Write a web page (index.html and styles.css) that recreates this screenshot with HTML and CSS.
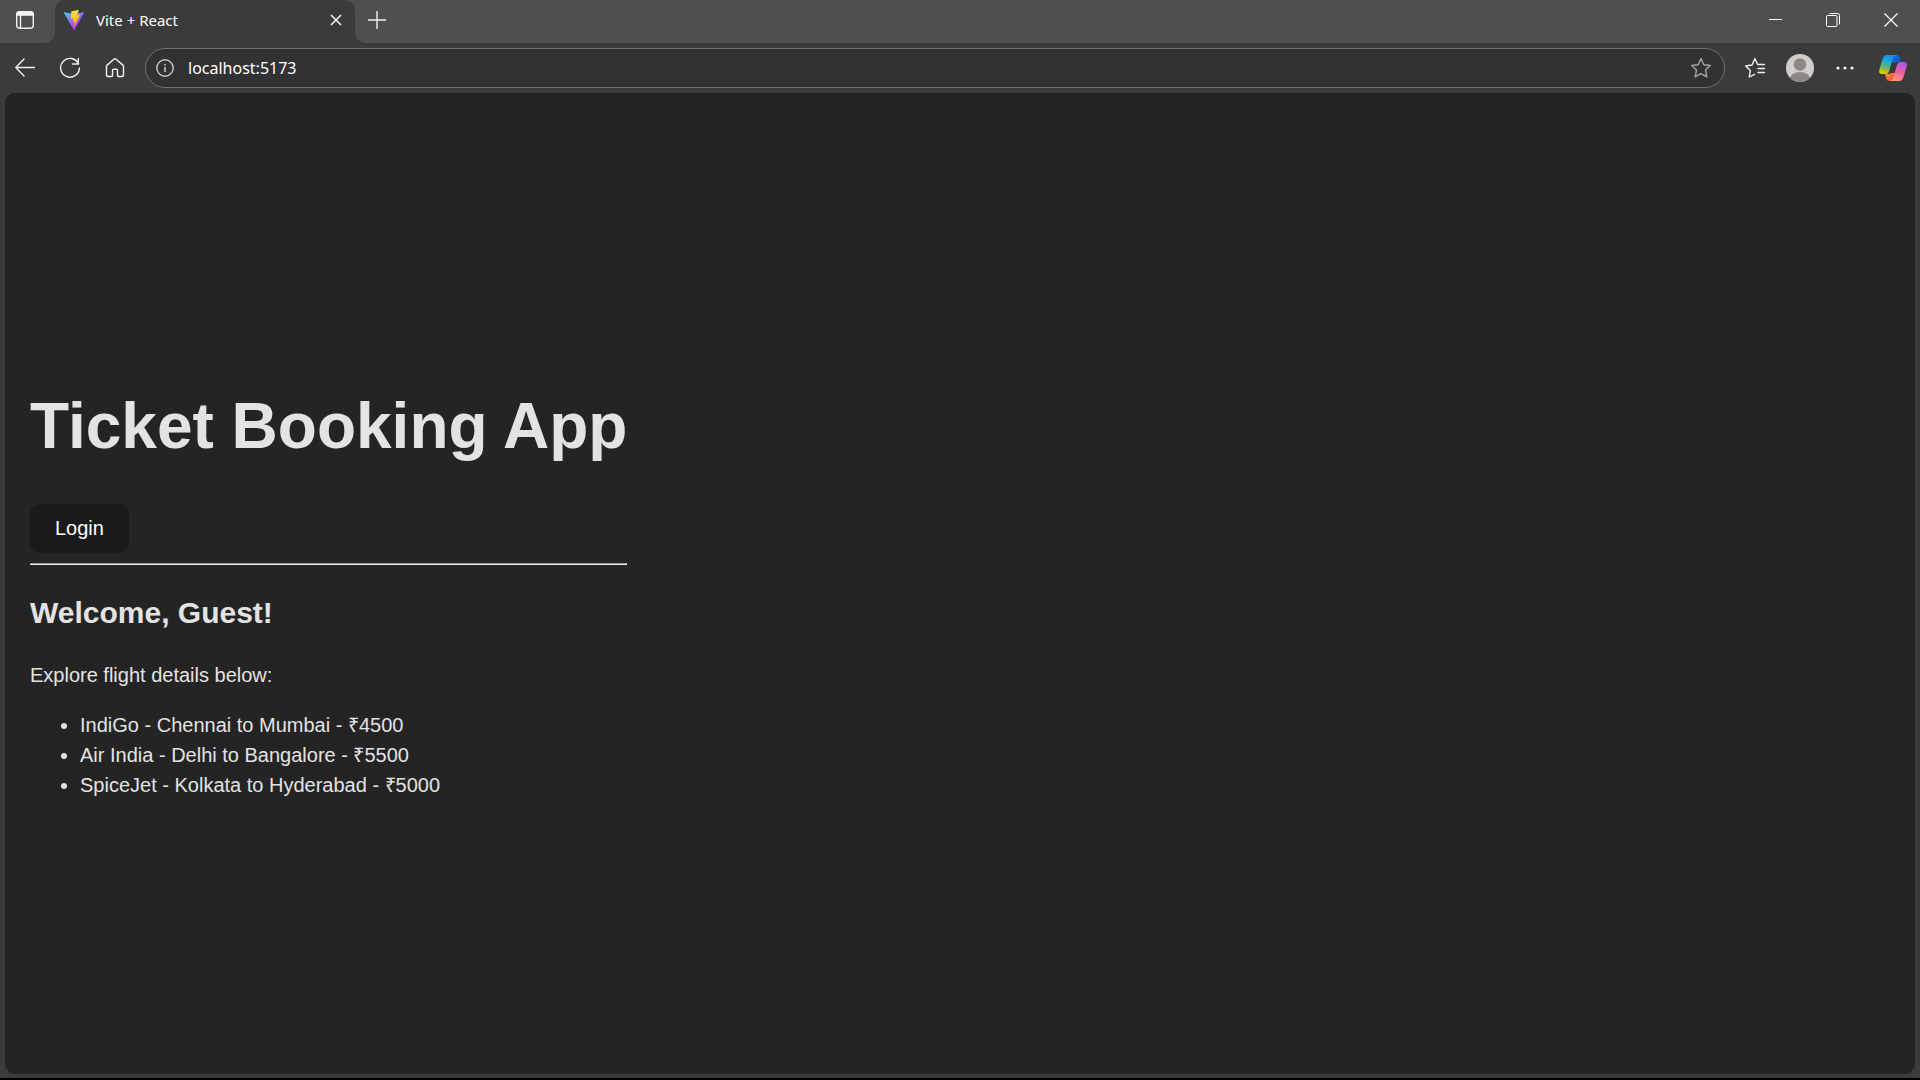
FILE: index.html
```html
<!DOCTYPE html>
<html lang="en">
<head>
<meta charset="utf-8">
<meta name="viewport" content="width=device-width, initial-scale=1">
<title>Vite + React</title>
<link rel="stylesheet" href="styles.css">
</head>
<body>
<div class="browser">
  <header class="titlebar">
    <div class="tab-actions">
      <button class="icon-button" type="button" aria-label="Tab actions">
        <svg width="20" height="20" viewBox="0 0 20 20" fill="none" stroke="#f2f2f2" stroke-width="1.4"><rect x="1.7" y="1.700" width="16.6" height="16.600" rx="3"/><path d="M2 4.500Q2 2 4.500 2H15.500Q18 2 18 4.500V5H2z" fill="#f2f2f2"/><path d="M5.500 5V18"/></svg>
      </button>
    </div>
    <div class="tab-slot">
      <div class="tab">
        <svg class="tab-icon" width="20" height="20" viewBox="0 0 257 257">
          <defs>
            <linearGradient id="vite-a" x1="0" y1="0" x2=".6" y2=".8"><stop offset="0" stop-color="#41d1ff"/><stop offset="1" stop-color="#bd34fe"/></linearGradient>
            <linearGradient id="vite-b" x1=".43" y1="0" x2=".5" y2=".9"><stop offset="0" stop-color="#ffea83"/><stop offset=".08" stop-color="#ffdd35"/><stop offset="1" stop-color="#ffa800"/></linearGradient>
          </defs>
          <path fill="url(#vite-a)" d="M255.153 37.938 134.897 252.976c-2.483 4.440-8.862 4.466-11.382.048L.875 37.958c-2.746-4.814 1.371-10.646 6.827-9.670l120.385 21.517a6.537 6.537 0 0 0 2.322-.004l117.867-21.483c5.438-.991 9.574 4.796 6.877 9.620Z"/>
          <path fill="url(#vite-b)" d="M185.432.063 96.440 17.501a3.268 3.268 0 0 0-2.634 3.014l-5.474 92.456a3.268 3.268 0 0 0 3.997 3.378l24.777-5.718c2.318-.535 4.413 1.507 3.936 3.838l-7.361 36.047c-.495 2.426 1.782 4.500 4.151 3.780l15.304-4.649c2.372-.720 4.652 1.360 4.150 3.788l-11.698 56.621c-.732 3.542 3.979 5.473 5.943 2.437l1.313-2.028 72.516-144.720c1.215-2.423-.880-5.186-3.540-4.672l-25.505 4.922c-2.396.462-4.435-1.770-3.759-4.114l16.646-57.705c.677-2.350-1.370-4.583-3.769-4.113Z"/>
        </svg>
        <span class="tab-title">Vite + React</span>
        <button class="tab-close" type="button" aria-label="Close tab">
          <svg width="12" height="12" viewBox="0 0 12 12" stroke="#f2f2f2" stroke-width="1.5"><path d="M1 1 11 11M11 1 1 11"/></svg>
        </button>
      </div>
    </div>
    <div class="tab-rest">
      <button class="icon-button" type="button" aria-label="New tab">
        <svg width="18" height="18" viewBox="0 0 18 18" stroke="#f2f2f2" stroke-width="1.400"><path d="M0 9H18M9 0V18"/></svg>
      </button>
      <div class="window-controls">
        <button class="window-button" type="button" aria-label="Minimize">
          <svg width="14" height="14" viewBox="0 0 14 14" stroke="#fff"><path d="M1 6.500H14"/></svg>
        </button>
        <button class="window-button" type="button" aria-label="Restore">
          <svg width="14" height="14" viewBox="0 0 14 14" fill="none" stroke="#fff"><rect x=".5" y="2.500" width="10.500" height="11" rx="1"/><path d="M3 1Q3.500.5 4.500.5H11.500Q13.500.5 13.500 2.500V10Q13.500 11 13 11.500"/></svg>
        </button>
        <button class="window-button" type="button" aria-label="Close window">
          <svg width="14" height="14" viewBox="0 0 14 14" stroke="#fff" stroke-width="1.200"><path d="M.5.5 13.500 13.500M13.500.5.5 13.500"/></svg>
        </button>
      </div>
    </div>
  </header>

  <nav class="toolbar" aria-label="Navigation">
    <button class="icon-button" type="button" aria-label="Back">
      <svg width="20" height="20" viewBox="0 0 20 20" fill="none" stroke="#f2f2f2" stroke-width="1.400" stroke-linecap="round" stroke-linejoin="round"><path d="M19.500 9.500H1M9 1 .8 9.500 9 18"/></svg>
    </button>
    <button class="icon-button" type="button" aria-label="Refresh">
      <svg width="22" height="22" viewBox="0 0 22 22" fill="none" stroke="#f2f2f2" stroke-width="1.400" stroke-linecap="round" stroke-linejoin="round"><path d="M19.600 7A9.400 9.400 0 1 0 20.400 11M19.300 1.500V7H13.500"/></svg>
    </button>
    <button class="icon-button" type="button" aria-label="Home">
      <svg width="20" height="20" viewBox="0 0 20 20" fill="none" stroke="#f2f2f2" stroke-width="1.400" stroke-linejoin="round"><path d="M1.500 8.500Q1.500 7.700 2.100 7.100L8.900 1.200Q10 .3 11.100 1.200L17.900 7.100Q18.500 7.700 18.500 8.500V17Q18.500 18.500 17 18.500H13.500Q12.500 18.500 12.500 17.500V12.500Q12.500 11.300 11.300 11.300H8.700Q7.500 11.300 7.500 12.500V17.500Q7.500 18.500 6.500 18.500H3Q1.500 18.500 1.500 17Z"/></svg>
    </button>
    <div class="address-bar">
      <button class="site-info" type="button" aria-label="Site information">
        <svg width="18" height="18" viewBox="0 0 18 18" fill="none" stroke="#c8c8c8" stroke-width="1.400"><circle cx="9" cy="9" r="8.200"/><path d="M9 8V13M9 5V6.500" stroke-width="1.600"/></svg>
      </button>
      <input class="address" type="text" value="localhost:5173" aria-label="Address" spellcheck="false">
      <button class="icon-button" type="button" aria-label="Add to favorites">
        <svg width="22" height="22" viewBox="0 0 22 22" fill="none" stroke="#a5a5a5" stroke-width="1.400" stroke-linejoin="round"><path d="M11 1.600 13.800 7.700 20.300 8.500 15.500 13 16.800 19.800 11 16.600 5.200 19.800 6.500 13 1.700 8.500 8.200 7.700Z"/></svg>
      </button>
    </div>
    <button class="icon-button" type="button" aria-label="Favorites">
      <svg width="22" height="22" viewBox="0 0 22 22" fill="none" stroke="#f2f2f2" stroke-width="1.400" stroke-linejoin="round" stroke-linecap="round"><path d="M10.500 17.300 5.200 20 6.300 13.500 1.600 9 8 8 10.900 1.600 13.700 7.500H20.500M14 11.500H20.500M14 15.500H20.500"/></svg>
    </button>
    <button class="icon-button" type="button" aria-label="Profile">
      <svg width="28" height="28" viewBox="0 0 28 28"><clipPath id="avatar-clip"><circle cx="14" cy="14" r="14"/></clipPath><circle cx="14" cy="14" r="14" fill="#d0cdca"/><g fill="#8b8886" clip-path="url(#avatar-clip)"><circle cx="14" cy="10.500" r="6.200"/><ellipse cx="14" cy="26" rx="10.500" ry="8"/></g></svg>
    </button>
    <button class="icon-button" type="button" aria-label="Settings and more">
      <svg width="18" height="4" viewBox="0 0 18 4" fill="#f2f2f2"><circle cx="2" cy="2" r="1.600"/><circle cx="9" cy="2" r="1.600"/><circle cx="16" cy="2" r="1.600"/></svg>
    </button>
    <button class="icon-button copilot" type="button" aria-label="Copilot">
      <svg width="28" height="26" viewBox="0 0 28 26">
        <defs>
          <linearGradient id="co-l" x1=".5" y1="0" x2=".3" y2="1"><stop offset="0" stop-color="#1a8cf0"/><stop offset=".35" stop-color="#24a7d5"/><stop offset=".65" stop-color="#65b863"/><stop offset="1" stop-color="#f5c60a"/></linearGradient>
          <linearGradient id="co-r" x1=".7" y1="0" x2=".3" y2="1"><stop offset="0" stop-color="#a05be8"/><stop offset=".5" stop-color="#ee5fa5"/><stop offset="1" stop-color="#ffa06b"/></linearGradient>
          <linearGradient id="co-t" x1="0" y1="0" x2="1" y2="1"><stop offset="0" stop-color="#127fe5"/><stop offset="1" stop-color="#1545b8"/></linearGradient>
          <linearGradient id="co-b" x1="0" y1="0" x2="1" y2="1"><stop offset="0" stop-color="#f99b24"/><stop offset="1" stop-color="#ee4055"/></linearGradient>
        </defs>
        <path fill="url(#co-t)" d="M13 0H17.500Q20 0 20.800 2.500L22.200 7H18.500Q16.500 7 15.800 8H12Z"/>
        <path fill="url(#co-b)" d="M6 19H9Q11.500 19 12.200 18H16V26H10.500Q8 26 7.200 23.500Z"/>
        <path fill="url(#co-l)" d="M8 0H17Q14.500.5 13.800 3L10 16.500Q9.300 19 6.800 19H3Q-.5 19 .2 15L3.500 4Q4.800 0 8 0Z"/>
        <path fill="url(#co-r)" d="M21 7H25Q28.500 7 27.800 11L24.500 22Q23.300 26 20 26H11Q13.500 25.500 14.200 23L18.200 9.500Q19 7 21 7Z"/>
      </svg>
    </button>
  </nav>

  <main class="page">
    <div class="app">
      <h1>Ticket Booking App</h1>
      <button class="login" type="button">Login</button>
      <hr>
      <h2>Welcome, Guest!</h2>
      <p>Explore flight details below:</p>
      <ul>
        <li>IndiGo - Chennai to Mumbai - ₹4500</li>
        <li>Air India - Delhi to Bangalore - ₹5500</li>
        <li>SpiceJet - Kolkata to Hyderabad - ₹5000</li>
      </ul>
    </div>
  </main>
</div>
</body>
</html>
```
FILE: styles.css
```css
* {
  box-sizing: border-box;
}

body {
  margin: 0;
  background: #000;
}

button {
  border: 0;
  padding: 0;
  background: none;
  color: inherit;
}

svg {
  display: block;
  flex: none;
}

.browser {
  display: flex;
  flex-direction: column;
  min-height: 100vh;
  background: #3b3b3b;
  border-bottom: 2px solid #000;
  font-family: "Noto Sans", "Open Sans", sans-serif;
  color: #fff;
}

/* Title bar and tabs */
.titlebar {
  display: flex;
  height: 43px;
}

.tab-actions,
.tab-rest {
  display: flex;
  align-items: center;
  background: #4f4f4f;
}

.tab-actions {
  flex: none;
  width: 55px;
  padding: 0 5px 3px;
  border-bottom-right-radius: 10px;
}

/* Only the top half is lit, so the corners below the tab blend into the toolbar */
.tab-slot {
  flex: none;
  width: 300px;
  background: linear-gradient(#4f4f4f 20px, #3b3b3b 20px);
}

.tab {
  display: flex;
  align-items: center;
  height: 100%;
  padding: 0 13px 3px 9px;
  background: #3b3b3b;
  border-radius: 10px 10px 0 0;
}

.tab-title {
  flex: 1;
  margin-left: 12px;
  font-size: 15px;
  line-height: 20px;
}

.tab-rest {
  flex: 1;
  justify-content: space-between;
  padding: 0 0 3px 2px;
  border-bottom-left-radius: 10px;
}

.window-controls {
  display: flex;
}

.icon-button,
.window-button {
  display: flex;
  align-items: center;
  justify-content: center;
  height: 40px;
}

.icon-button {
  flex: none;
  width: 40px;
}

.window-button {
  width: 58px;
}

/* Toolbar */
.toolbar {
  display: flex;
  align-items: center;
  gap: 5px;
  height: 50px;
  padding: 0 7px 0 5px;
}

.address-bar {
  display: flex;
  flex: 1;
  align-items: center;
  height: 40px;
  margin: 0 5px;
  padding: 0 3px 0 10px;
  background: #323232;
  border: 1px solid #707070;
  border-radius: 20px;
}

.address {
  flex: 1;
  min-width: 0;
  margin-left: 14px;
  padding: 0;
  background: none;
  border: 0;
  outline: 0;
  color: #fff;
  font: 16px/24px "Noto Sans", "Open Sans", sans-serif;
}

.copilot {
  margin-left: 3px;
}

/* Web page */
.page {
  display: flex;
  flex: 1;
  align-items: center;
  margin: 0 5px 4px;
  padding: 0 25px;
  background: #242424;
  border-radius: 10px;
  color: #e3e3e3;
  font: 20px/30px "Liberation Sans", Arial, sans-serif;
}

h1 {
  margin: 43px 0;
  font-size: 64px;
  line-height: 70px;
}

.login {
  display: block;
  padding: 13px 25px;
  background: #1a1a1a;
  border-radius: 10px;
  color: #fff;
  font: 20px/23px "Liberation Sans", Arial, sans-serif;
}

hr {
  margin: 10px 0 25px;
  border: 1px solid;
  border-color: #9a9a9a #eee #eee #9a9a9a;
}

h2 {
  margin: 25px 0;
  font-size: 30px;
  line-height: 45px;
}

p {
  margin: 20px 0;
}

ul {
  margin: 20px 0;
  padding-left: 50px;
}
```
